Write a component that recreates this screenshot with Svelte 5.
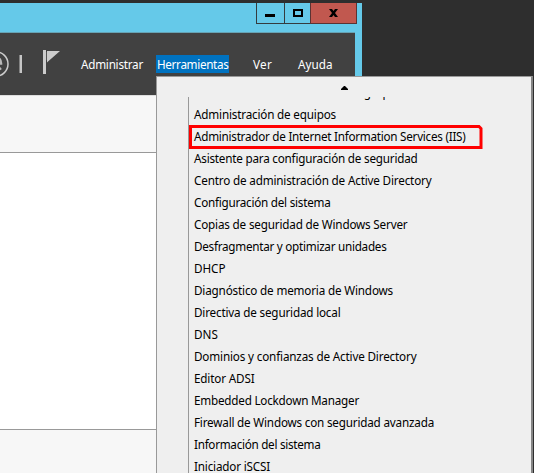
<script>
  const tools = [
    ['Administración de directivas de grupo', 202.5],
    ['Administración de equipos', 142],
    ['Administrador de Internet Information Services (IIS)', 271.5],
    ['Asistente para configuración de seguridad', 223.5],
    ['Centro de administración de Active Directory', 237.5],
    ['Configuración del sistema', 136.5],
    ['Copias de seguridad de Windows Server', 213.5],
    ['Desfragmentar y optimizar unidades', 192.5],
    ['DHCP', 31.5],
    ['Diagnóstico de memoria de Windows', 199],
    ['Directiva de seguridad local', 146.5],
    ['DNS', 24],
    ['Dominios y confianzas de Active Directory', 222.5],
    ['Editor ADSI', 60.5],
    ['Embedded Lockdown Manager', 165],
    ['Firewall de Windows con seguridad avanzada', 240],
    ['Información del sistema', 126.5],
    ['Iniciador iSCSI', 76]
  ];
  const menus = [
    ['Administrar', 62],
    ['Herramientas', 71.5],
    ['Ver', 19],
    ['Ayuda', 34.5]
  ];

  // Tracks a label so that it fills the given width.
  function fit(node, width) {
    const natural = node.getBoundingClientRect().width;
    node.style.letterSpacing = (width - natural) / node.textContent.length + 'px';
  }
</script>

<div class="desktop">
  <div class="window">
    <div class="titlebar">
      <div class="btn min"><svg width="10" height="8"><path d="M0 5h10v3H0z" /></svg></div>
      <div class="btn max"><svg width="10" height="8"><path fill-rule="evenodd" d="M0 0h10v8H0zM2 2v4h6V2z" /></svg></div>
      <div class="btn close"><svg width="9" height="8"><path d="M0 0h3l1.500 2L6 0h3L6 4l3 4H6L4.500 6 3 8H0l3-4z" /></svg></div>
    </div>
    <div class="client">
      <div class="toolbar">
        <svg class="icons" width="64" height="62" fill="none">
          <circle cx="-4.200" cy="31" r="12.200" stroke="#ccc" stroke-width="1.500" />
          <path d="M-9 30.500H1C1 22.500-9 22.500-9 30.500C-9 37.500-2 37.500 1 35" stroke="#b9b9b9" stroke-width="2.600" />
          <path d="M19.500 22h2.500v18h-2.500z" fill="#c6c6c6" />
          <path d="M43 17h3v24h-3zM47 18h13L48 28.500 47 29.500z" fill="#ccc" />
          <path d="M46.500 19v8" stroke="#555" />
        </svg>
        <nav>
          {#each menus as [label, width], i}
            <div class="menu m{i}" class:active={i === 1}><span use:fit={width}>{label}</span></div>
          {/each}
        </nav>
      </div>
      <div class="band top"></div>
      <div class="page"></div>
      <div class="band"></div>
    </div>
  </div>

  <div class="dropdown">
    <div class="scroll-up"><svg width="7" height="4"><path d="M3 0h1l3 3v1H0V3z" /></svg></div>
    <div class="list">
      {#each tools as [label, width], i}
        <div class="item" class:first={i === 0}>
          <span use:fit={width}>{label}</span>
          {#if i === 2}
            <svg class="mark" width="296" height="26" fill="none"><path d="M2.500 2V23M1 2.500H291L293 4.500V23.500H1" stroke="#f00" stroke-width="3" /></svg>
          {/if}
        </div>
      {/each}
    </div>
  </div>
</div>

<style>
  .desktop {
    position: relative;
    box-sizing: border-box;
    width: 534px;
    height: 473px;
    padding-top: 3px;
    overflow: hidden;
    background: #2e2e2e;
    font: 11.7px/22px "Noto Sans", "Open Sans", sans-serif;
    white-space: nowrap;
  }
  .window {
    display: flex;
    flex-direction: column;
    width: 362px;
    height: 470px;
    background: #65c9e9;
  }
  .titlebar {
    display: flex;
    justify-content: flex-end;
    height: 29px;
    padding-right: 5px;
  }
  .btn {
    box-sizing: border-box;
    height: 21px;
    border: solid #343b3e;
    border-width: 0 0 1px 1px;
    padding-top: 6px;
    display: flex;
    justify-content: center;
    align-items: flex-start;
  }
  .min {
    width: 28px;
    padding-right: 1px;
  }
  .max {
    width: 26px;
    padding-left: 1px;
  }
  .close {
    width: 47px;
    border-right-width: 1px;
    border-color: #5b3333;
    background: #c1584f;
  }
  .client {
    display: flex;
    flex: 1;
    flex-direction: column;
    width: 355px;
    border-top: 1px solid #66a3b5;
    background: #fff;
  }
  .toolbar {
    display: flex;
    height: 62px;
    background: #414141;
    color: #fff;
  }
  .icons { flex: none; }
  nav {
    display: flex;
    padding: 22px 0 0 15px;
  }
  .menu {
    box-sizing: border-box;
    height: 18px;
    padding-left: 2px;
    line-height: 19px;
  }
  .m0 { width: 77px; }
  .m1 { width: 73px; padding-left: 1px; }
  .m2 { width: 68px; padding-left: 24px; }
  .m3 { padding-left: 1px; }
  .active { background: #0072c0; }
  .band {
    flex: 1;
    background: #f7f7f7;
  }
  .top {
    box-sizing: border-box;
    flex: none;
    height: 58px;
    border-top: 1px solid #dedede;
    border-bottom: 1px solid #999;
  }
  .page {
    height: 276px;
    border-bottom: 1px solid #999;
    background: #fff;
  }
  .dropdown {
    position: absolute;
    top: 76px;
    left: 156px;
    box-sizing: border-box;
    width: 377px;
    height: 410px;
    border: 1px solid #999;
    border-right: 2px solid #858585;
    background: #efefef;
    color: #000;
  }
  .scroll-up {
    height: 20px;
    display: flex;
    justify-content: center;
    align-items: flex-start;
    padding-top: 9px;
    box-sizing: border-box;
  }
  .list {
    height: 376px;
    margin-left: 31px;
    overflow: hidden;
    border-left: 1px solid #999;
  }
  .item {
    position: relative;
    height: 22px;
    padding-left: 5px;
  }
  .first { margin-top: -16px; }
  .mark {
    position: absolute;
    top: -1px;
    left: -1px;
  }
</style>
